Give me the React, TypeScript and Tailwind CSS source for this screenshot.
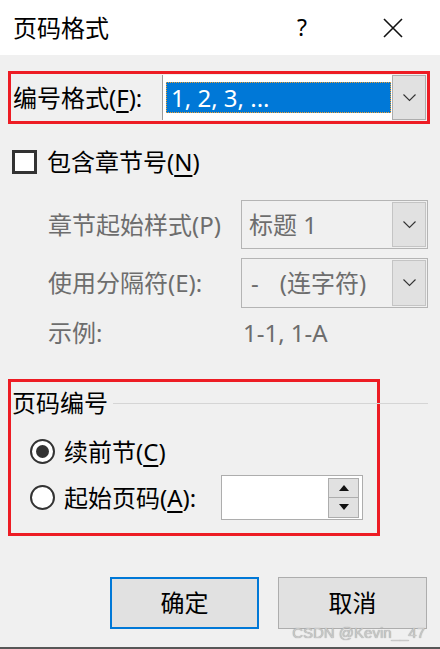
const font = "font-['Noto_Sans','Noto_Sans_CJK_SC',sans-serif]";

function DropButton({ muted }: { muted?: boolean }) {
  return (
    <div
      className={`w-[34px] h-full flex items-center justify-center bg-[#e1e1e1] border ${
        muted ? 'border-[#c4c4c4]' : 'border-[#adadad]'
      }`}
    >
      <svg width="13" height="8" viewBox="0 0 13 8">
        <path d="M0.5 0.5 L6.5 6.5 L12.5 0.5" stroke="#333" strokeWidth="1.1" fill="none" />
      </svg>
    </div>
  );
}

function Radio({ checked }: { checked?: boolean }) {
  return (
    <div className="w-[25px] h-[25px] shrink-0 rounded-full border-2 border-[#333] bg-white flex items-center justify-center">
      {checked && <div className="w-[13px] h-[13px] rounded-full bg-[#333]" />}
    </div>
  );
}

export default function App() {
  return (
    <div className={`relative w-[440px] h-[649px] bg-[#f0f0f0] flex flex-col text-black ${font} leading-none whitespace-nowrap`}>
      {/* title bar */}
      <div className="h-[55px] bg-white flex items-center shrink-0">
        <span className="ml-[13px] text-[24px]">页码格式</span>
        <span className="ml-auto mr-[76px] text-[23px]">?</span>
        <svg className="mr-[37px]" width="20" height="20" viewBox="0 0 20 20">
          <path d="M1 1 L19 19 M19 1 L1 19" stroke="#111" strokeWidth="1.6" fill="none" />
        </svg>
      </div>

      {/* number format */}
      <div className="mt-[16px] ml-[8px] w-[422px] h-[53px] border-[3px] border-[#ed1c24] flex items-center pl-[2px] pr-px">
        <span className="text-[24px]">
          编号格式(<span className="underline underline-offset-4">F</span>):
        </span>
        <div className="ml-auto w-[264px] h-[45px] bg-white border-l border-[#9a9a9a] flex items-center">
          <div className="ml-[3px] w-[225px] h-[31px] bg-[#0078d7] outline-1 outline-dotted outline-[#f0a030] -outline-offset-1 flex items-center">
            <span className="ml-[5px] text-[24px] text-white">1, 2, 3, ...</span>
          </div>
          <div className="ml-auto h-full">
            <DropButton />
          </div>
        </div>
      </div>

      {/* include chapter */}
      <div className="mt-[26px] ml-[12px] h-[24px] flex items-center">
        <div className="w-[25px] h-[24px] border-[3px] border-[#333] bg-white" />
        <span className="ml-[10px] text-[24px]">
          包含章节号(<span className="underline underline-offset-4">N</span>)
        </span>
      </div>

      <div className="mt-[26px] ml-[48px] h-[49px] flex items-center text-[#6d6d6d]">
        <span className="text-[24px] w-[193px]">章节起始样式(P)</span>
        <div className="w-[187px] h-full border border-[#b4b4b4] flex items-center">
          <span className="ml-[7px] text-[24px]">标题 1</span>
          <div className="ml-auto h-[47px] p-px">
            <DropButton muted />
          </div>
        </div>
      </div>

      <div className="mt-[9px] ml-[48px] h-[50px] flex items-center text-[#6d6d6d]">
        <span className="text-[24px] w-[193px]">使用分隔符(E):</span>
        <div className="w-[187px] h-full border border-[#b4b4b4] flex items-center">
          <span className="ml-[9px] text-[24px]">-</span>
          <span className="ml-[21px] text-[24px]">(连字符)</span>
          <div className="ml-auto h-[48px] p-px">
            <DropButton muted />
          </div>
        </div>
      </div>

      <div className="mt-[13px] ml-[48px] h-[24px] flex items-center text-[#6d6d6d]">
        <span className="text-[24px] w-[195px]">示例:</span>
        <span className="text-[24px]">1-1, 1-A</span>
      </div>

      {/* page numbering group */}
      <div className="mt-[34px] ml-[8px] w-[372px] h-[157px] border-[3px] border-[#ed1c24] flex flex-col">
        <div className="mt-[10px] h-[22px] flex items-center">
          <span className="ml-[1px] text-[24px] shrink-0">页码编号</span>
          <div className="ml-[5px] w-[315px] shrink-0 h-px bg-[#d5d5d5]" />
        </div>
        <div className="mt-[25px] ml-[19px] h-[25px] flex items-center">
          <Radio checked />
          <span className="ml-[9px] text-[24px]">
            续前节(<span className="underline underline-offset-4">C</span>)
          </span>
        </div>
        <div className="mt-[11px] ml-[19px] h-[45px] flex items-center">
          <Radio />
          <span className="ml-[9px] text-[24px] w-[157px] shrink-0">
            起始页码(<span className="underline underline-offset-4">A</span>):
          </span>
          <div className="w-[142px] shrink-0 h-[45px] bg-white border border-[#adadad] flex justify-end items-center pr-[3px]">
            <div className="w-[31px] flex flex-col">
              <div className="h-[20px] bg-[#e1e1e1] border border-[#adadad] flex items-center justify-center">
                <svg width="10" height="6" viewBox="0 0 10 6"><path d="M0 6 L5 0 L10 6 Z" fill="#111" /></svg>
              </div>
              <div className="h-[20px] bg-[#e1e1e1] border border-t-0 border-[#adadad] flex items-center justify-center">
                <svg width="10" height="6" viewBox="0 0 10 6"><path d="M0 0 L5 6 L10 0 Z" fill="#111" /></svg>
              </div>
            </div>
          </div>
        </div>
      </div>

      {/* buttons */}
      <div className="mt-[41px] flex">
        <button className="ml-[110px] w-[149px] h-[52px] bg-[#e1e1e1] border-2 border-[#0078d7] text-[24px]">确定</button>
        <button className="ml-[19px] w-[149px] h-[52px] bg-[#e1e1e1] border border-[#adadad] text-[24px]">取消</button>
      </div>

      <div className="mt-auto h-[2px] bg-[#575757]" />

      {/* watermark */}
      <span className="absolute right-[15px] bottom-[9px] text-[15px] text-[#c9c9c9] [text-shadow:0_0_1px_#8a8a8a] font-['Liberation_Sans',sans-serif]">
        CSDN @Kevin__47
      </span>
    </div>
  );
}
